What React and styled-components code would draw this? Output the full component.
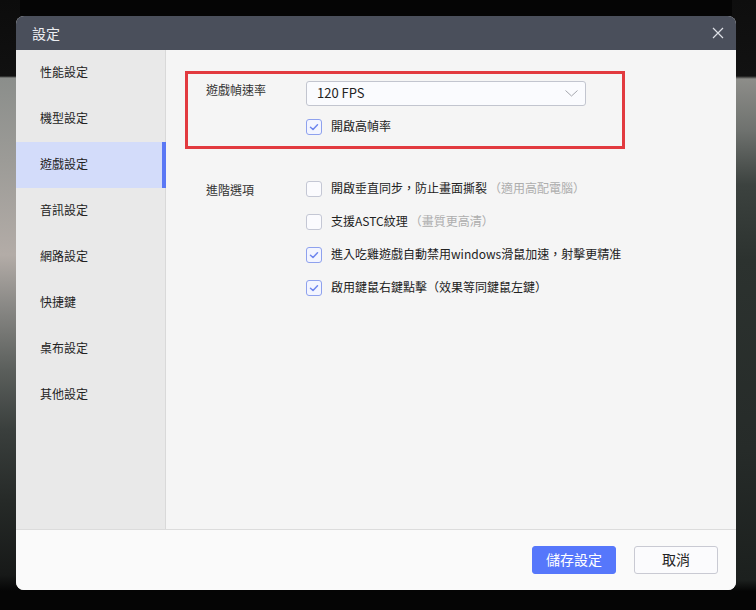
import React from "react";
import styled, { createGlobalStyle, css } from "styled-components";

const GlobalStyle = createGlobalStyle`
  html, body { margin: 0; padding: 0; background: #050505; }
  body { font-family: "Noto Sans CJK TC", "Noto Sans", "Liberation Sans", sans-serif; }
  * { box-sizing: border-box; }
`;

const Backdrop = styled.div`
  width: 756px;
  height: 610px;
  padding: 16px 20px 20px 16px;
  background:
    linear-gradient(180deg, #0c0c0c 0, #111 76px, #8b8e8b 78px, #9c9b97 160px, #b3aca7 255px, #8a8986 305px, #5b5f5c 370px, #3a3f3d 430px, #262a28 500px, #171918 575px, #050505 591px) left top / 20px 100% no-repeat,
    linear-gradient(180deg, #0e0e0e 0, #121212 76px, #8d8d89 79px, #6f726f 130px, #3c423f 185px, #2c322f 260px, #262b29 450px, #1c201e 580px, #050505 591px) right top / 24px 100% no-repeat,
    #050505;
`;

const Dialog = styled.div`
  width: 720px;
  height: 574px;
  display: flex;
  flex-direction: column;
  border-radius: 8px;
  overflow: hidden;
  background: #f5f5f5;
`;

const TitleBar = styled.div`
  height: 34px;
  flex: none;
  display: flex;
  align-items: center;
  justify-content: space-between;
  padding: 0 11px 0 16px;
  background: #4a4f5b;
`;

const Title = styled.div`
  color: #eceef2;
  font-size: 14px;
  line-height: 18px;
  padding-bottom: 1px;
`;

const CloseButton = styled.button`
  width: 14px;
  height: 14px;
  padding: 0;
  border: none;
  background: none;
  display: flex;
  align-items: center;
  justify-content: center;
  cursor: pointer;
`;

const Body = styled.div`
  flex: 1;
  display: flex;
  min-height: 0;
`;

const Sidebar = styled.nav`
  width: 150px;
  flex: none;
  background: #e9e9e9;
  border-right: 1px solid #d9d9d9;
`;

const NavItem = styled.div`
  height: 46px;
  margin-right: -1px;
  display: flex;
  align-items: center;
  padding: 0 0 3px 24px;
  font-size: 12px;
  line-height: 16px;
  color: #222;
  cursor: pointer;
  ${(p) =>
    p.$active &&
    css`
      background: #d3dcfa;
      box-shadow: inset -4px 0 0 #5a78f5;
    `}
`;

const Content = styled.main`
  flex: 1;
  padding: 21px 0 0 19px;
  background: #f5f5f5;
  display: flex;
  flex-direction: column;
  gap: 22px;
`;

const Section = styled.section`
  width: 440px;
  display: grid;
  grid-template-columns: 100px 1fr;
  border: 3px solid ${(p) => (p.$highlight ? "#e23a3f" : "transparent")};
  padding: 7px 0 11px 18px;
`;

const Label = styled.div`
  font-size: 12px;
  line-height: 18px;
  color: #333;
`;

const Options = styled.div`
  display: flex;
  flex-direction: column;
  gap: ${(p) => p.$gap}px;
`;

const Select = styled.div`
  width: 280px;
  height: 25px;
  border: 1px solid #c2c5cf;
  border-radius: 3px;
  background: #fafbfe;
  display: flex;
  align-items: center;
  justify-content: space-between;
  padding: 0 7px 2px 10px;
  font-size: 13px;
  line-height: 16px;
  color: #222;
`;

const Chevron = styled.svg`
  margin-top: 2px;
`;

const Row = styled.label`
  display: flex;
  align-items: center;
  gap: 9px;
  height: 16px;
  font-size: 12px;
  line-height: 16px;
  color: #222;
  white-space: nowrap;
  cursor: pointer;
`;

const RowText = styled.span`
  margin-top: -3px;
`;

const Box = styled.span`
  width: 16px;
  height: 16px;
  flex: none;
  border-radius: 3px;
  border: 1px solid ${(p) => (p.$checked ? "#8ea1ee" : "#c4c7d4")};
  background: ${(p) => (p.$checked ? "#f3f5ff" : "#fbfbfe")};
  display: flex;
  align-items: center;
  justify-content: center;
`;

const Hint = styled.span`
  color: #adadad;
  margin-left: 2px;
`;

const Footer = styled.footer`
  height: 61px;
  flex: none;
  border-top: 1px solid #dcdcdc;
  background: #fafafa;
  display: flex;
  align-items: center;
  justify-content: flex-end;
  gap: 18px;
  padding-right: 18px;
`;

const Button = styled.button`
  width: 84px;
  height: 28px;
  border-radius: 3px;
  font-family: inherit;
  font-size: 14px;
  line-height: 18px;
  padding: 0 0 2px;
  cursor: pointer;
  ${(p) =>
    p.$primary
      ? css`
          background: #5677fb;
          border: 1px solid #5677fb;
          color: #fff;
        `
      : css`
          background: #fbfbfd;
          border: 1px solid #c9cad3;
          color: #222;
        `}
`;

const Checkbox = ({ checked, children }) => (
  <Row>
    <Box $checked={checked}>
      {checked && (
        <svg width="12" height="12" viewBox="0 0 12 12">
          <path d="M2.5 6.2 L5 8.5 L9.5 3.8" fill="none" stroke="#6d85ee" strokeWidth="1.5" strokeLinecap="round" strokeLinejoin="round" />
        </svg>
      )}
    </Box>
    <RowText>{children}</RowText>
  </Row>
);

const navItems = ["性能設定", "機型設定", "遊戲設定", "音訊設定", "網路設定", "快捷鍵", "桌布設定", "其他設定"];

export default function App() {
  return (
    <>
      <GlobalStyle />
      <Backdrop>
        <Dialog>
          <TitleBar>
            <Title>設定</Title>
            <CloseButton aria-label="close">
              <svg width="12" height="12" viewBox="0 0 12 12">
                <path d="M1 1 L11 11 M11 1 L1 11" stroke="#dde0e6" strokeWidth="1.2" fill="none" />
              </svg>
            </CloseButton>
          </TitleBar>
          <Body>
            <Sidebar>
              {navItems.map((n) => (
                <NavItem key={n} $active={n === "遊戲設定"}>
                  {n}
                </NavItem>
              ))}
            </Sidebar>
            <Content>
              <Section $highlight>
                <Label>遊戲幀速率</Label>
                <Options $gap={13}>
                  <Select>
                    <span>120 FPS</span>
                    <Chevron width="13" height="7" viewBox="0 0 13 7">
                      <path d="M0.5 0.5 L6.5 6 L12.5 0.5" fill="none" stroke="#a4a6ad" strokeWidth="1" />
                    </Chevron>
                  </Select>
                  <Checkbox checked>開啟高幀率</Checkbox>
                </Options>
              </Section>
              <Section>
                <Label>進階選項</Label>
                <Options $gap={17}>
                  <Checkbox>
                    開啟垂直同步，防止畫面撕裂<Hint>（適用高配電腦）</Hint>
                  </Checkbox>
                  <Checkbox>
                    支援ASTC紋理<Hint>（畫質更高清）</Hint>
                  </Checkbox>
                  <Checkbox checked>進入吃雞遊戲自動禁用windows滑鼠加速，射擊更精准</Checkbox>
                  <Checkbox checked>啟用鍵鼠右鍵點擊（效果等同鍵鼠左鍵）</Checkbox>
                </Options>
              </Section>
            </Content>
          </Body>
          <Footer>
            <Button $primary>儲存設定</Button>
            <Button>取消</Button>
          </Footer>
        </Dialog>
      </Backdrop>
    </>
  );
}
